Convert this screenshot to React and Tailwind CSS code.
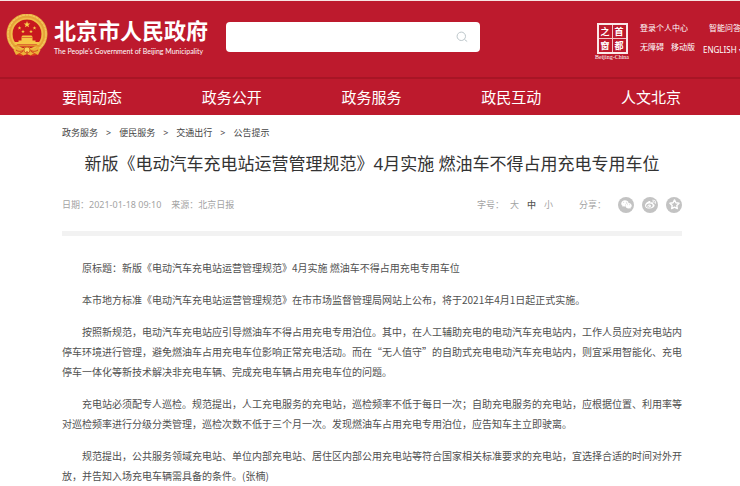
import React, { useState } from "react";
import { FaWeixin, FaWeibo } from "react-icons/fa";
import { FiStar } from "react-icons/fi";

const navItems = ["要闻动态", "政务公开", "政务服务", "政民互动", "人文北京"];
const crumbs = ["政务服务", "便民服务", "交通出行", "公告提示"];
const sizes = ["大", "中", "小"];

const paragraphs = [
  "原标题：新版《电动汽车充电站运营管理规范》4月实施 燃油车不得占用充电专用车位",
  "本市地方标准《电动汽车充电站运营管理规范》在市市场监督管理局网站上公布，将于2021年4月1日起正式实施。",
  "按照新规范，电动汽车充电站应引导燃油车不得占用充电专用泊位。其中，在人工辅助充电的电动汽车充电站内，工作人员应对充电站内停车环境进行管理，避免燃油车占用充电车位影响正常充电活动。而在“无人值守”的自助式充电电动汽车充电站内，则宜采用智能化、充电停车一体化等新技术解决非充电车辆、完成充电车辆占用充电车位的问题。",
  "充电站必须配专人巡检。规范提出，人工充电服务的充电站，巡检频率不低于每日一次；自助充电服务的充电站，应根据位置、利用率等对巡检频率进行分级分类管理，巡检次数不低于三个月一次。发现燃油车占用充电专用泊位，应告知车主立即驶离。",
  "规范提出，公共服务领域充电站、单位内部充电站、居住区内部公用充电站等符合国家相关标准要求的充电站，宜选择合适的时间对外开放，并告知入场充电车辆需具备的条件。(张楠)",
];

const shares = [
  { name: "微信", icon: <FaWeixin size={11} /> },
  { name: "微博", icon: <FaWeibo size={11} /> },
  { name: "收藏", icon: <FiStar size={11} strokeWidth={3} /> },
];

const Star = ({ x, y, r }) => (
  <path
    transform={`translate(${x} ${y}) scale(${r})`}
    d="M0-1 .24-.31.95-.31.38.12.59.81 0 .4-.59.81-.38.12-.95-.31-.24-.31Z"
    fill="#f8d24a"
  />
);

const Emblem = () => (
  <svg viewBox="0 0 84 86" className="h-[43px] w-[42px] shrink-0" aria-hidden="true">
    <path d="M24 68h36l4 13-11 3-11-3-11 3-11-3Z" fill="#dc3c1e" />
    <circle cx="42" cy="40" r="35" fill="#c8191e" />
    <circle cx="42" cy="40" r="35" fill="none" stroke="#e6a338" strokeWidth="12" />
    <circle cx="42" cy="40" r="38" fill="none" stroke="#f2c75c" strokeWidth="3" strokeDasharray="6 1" />
    <circle cx="42" cy="40" r="31" fill="none" stroke="#f0bd4a" strokeWidth="3" />
    <Star x={42} y={21} r={7} />
    <Star x={27} y={28} r={4} />
    <Star x={34} y={35} r={4} />
    <Star x={50} y={35} r={4} />
    <Star x={57} y={28} r={4} />
    {/* gate tower */}
    <path d="M33 43h18l3 4H30ZM31 48h22v5h6v3H25v-3h6ZM18 56h48v5H18Z" fill="#f5c646" />
    <path d="M17 62h50v3H17Z" fill="#e4952a" />
    {/* gear and ribbons */}
    <path d="M20 65c5 7 11 5 15 3 4-3 10-3 14 0 4 2 10 4 15-3l5 7-5 10-7-4-8 5-7-4-7 4-8-5-7 4-5-10Z" fill="#ecb238" />
    <path d="M20 72c7 5 13 2 17-1m27 1c-7 5-13 2-17-1M27 79l8-5m22 5-8-5" fill="none" stroke="#d4451f" strokeWidth="2" />
    <circle cx="42" cy="72" r="6" fill="#f9d35b" stroke="#d66c21" strokeWidth="2" />
    <path d="M42 74v8" stroke="#cf371f" strokeWidth="2" />
  </svg>
);

const Seal = () => (
  <a href="#" className="flex w-9 shrink-0 flex-col items-center">
    <span className="grid h-[31px] w-[31px] grid-cols-2 gap-px border-2 border-[#fbe9e9] bg-[#f3c5c8] font-['Noto_Sans_CJK_SC',sans-serif] text-[9px] leading-[13px] font-bold">
      {["之", "首", "窗", "都"].map((c) => (
        <span key={c} className="bg-[#bd1a2d] text-center">{c}</span>
      ))}
    </span>
    <span className="font-['Liberation_Serif',serif] text-[6px] leading-[7px] whitespace-nowrap">Beijing-China</span>
  </a>
);

const Header = () => (
  <header className="overflow-hidden border-t border-[#f7e4e2] bg-[#bd1a2d] text-white">
    <div className="flex h-[76px] items-start pl-[6px]">
      <div className="flex shrink-0 pt-[13px]">
        <Emblem />
        <div className="ml-[6px] pt-[3px]">
          <p className="text-[22px] leading-[26px] font-bold">北京市人民政府</p>
          <p className="font-['Lato',sans-serif] text-[7px] leading-[16px] whitespace-nowrap">The People's Government of Beijing Municipality</p>
        </div>
      </div>
      <form className="mt-[21px] ml-[18px] flex h-[30px] min-w-40 flex-1 items-center rounded bg-white pr-3">
        <input type="search" aria-label="搜索" className="h-full min-w-0 flex-1 px-3 text-xs text-gray-700 outline-none" />
        <button type="button" aria-label="搜索" className="text-[#bcc6ca]">
          <svg viewBox="0 0 12 12" className="h-3 w-3" fill="none" stroke="currentColor">
            <circle cx="5.3" cy="5.3" r="4.2" />
            <path d="m8.5 8.5 2.7 2" />
          </svg>
        </button>
      </form>
      <div className="mt-[22px] ml-[114px] flex shrink-0 text-[8px] leading-[10px]">
        <Seal />
        <div className="ml-[10px] flex w-[54px] flex-col gap-[9px] whitespace-nowrap">
          <a href="#">登录个人中心</a>
          <div className="flex gap-[7px]">
            <a href="#">无障碍</a>
            <a href="#">移动版</a>
          </div>
        </div>
        <div className="ml-[9px] flex w-[37px] flex-col gap-3 whitespace-nowrap">
          <a href="#" className="pl-[6px]">智能问答</a>
          <a href="#">ENGLISH ▾</a>
        </div>
      </div>
    </div>
    <nav className="flex h-[38px] items-center justify-between border-t-2 border-[#a81525] pr-[59px] pl-[62px] text-[15px]">
      {navItems.map((item) => (
        <a key={item} href="#">{item}</a>
      ))}
    </nav>
  </header>
);

const App = () => {
  const [size, setSize] = useState("中");

  return (
    <div className="min-h-screen bg-white font-['Noto_Sans','Noto_Sans_CJK_SC',sans-serif]">
      <Header />
      <main className="pr-[58px] pl-[62px] text-[#505050]">
        <nav className="flex gap-2 pt-3 text-[9px] leading-3 text-[#444]">
          {crumbs.map((crumb, i) => (
            <React.Fragment key={crumb}>
              {i > 0 && <span>&gt;</span>}
              <a href="#">{crumb}</a>
            </React.Fragment>
          ))}
        </nav>
        <h1 className="mt-[13px] text-center text-[17px] leading-6 whitespace-nowrap text-[#333]">
          新版《电动汽车充电站运营管理规范》4月实施 燃油车不得占用充电专用车位
        </h1>
        <div className="mt-5 flex h-[17px] items-center justify-between text-[9px] text-[#a3a3a3]">
          <div className="flex gap-[10px]">
            <span>日期：2021-01-18 09:10</span>
            <span>来源：北京日报</span>
          </div>
          <div className="flex items-center">
            <span>字号：</span>
            <div className="ml-[6px] flex gap-2">
              {sizes.map((s) => (
                <button key={s} type="button" onClick={() => setSize(s)} className={s === size ? "font-medium text-[#555]" : ""}>
                  {s}
                </button>
              ))}
            </div>
            <span className="ml-[26px]">分享：</span>
            <div className="ml-3 flex gap-2">
              {shares.map((share) => (
                <button key={share.name} type="button" aria-label={share.name} className="flex h-4 w-4 items-center justify-center rounded-full bg-[#c3c3c3] text-white">
                  {share.icon}
                </button>
              ))}
            </div>
          </div>
        </div>
        <hr className="mt-[18px] border-t-[5px] border-[#f2f2f2]" />
        <article className="flex flex-col gap-3 pt-[22px] font-['Noto_Sans_CJK_SC',sans-serif] text-[10px] leading-5">
          {paragraphs.map((text, i) => (
            <p key={i} className="indent-[2em]">{text}</p>
          ))}
        </article>
      </main>
    </div>
  );
};

export default App;
